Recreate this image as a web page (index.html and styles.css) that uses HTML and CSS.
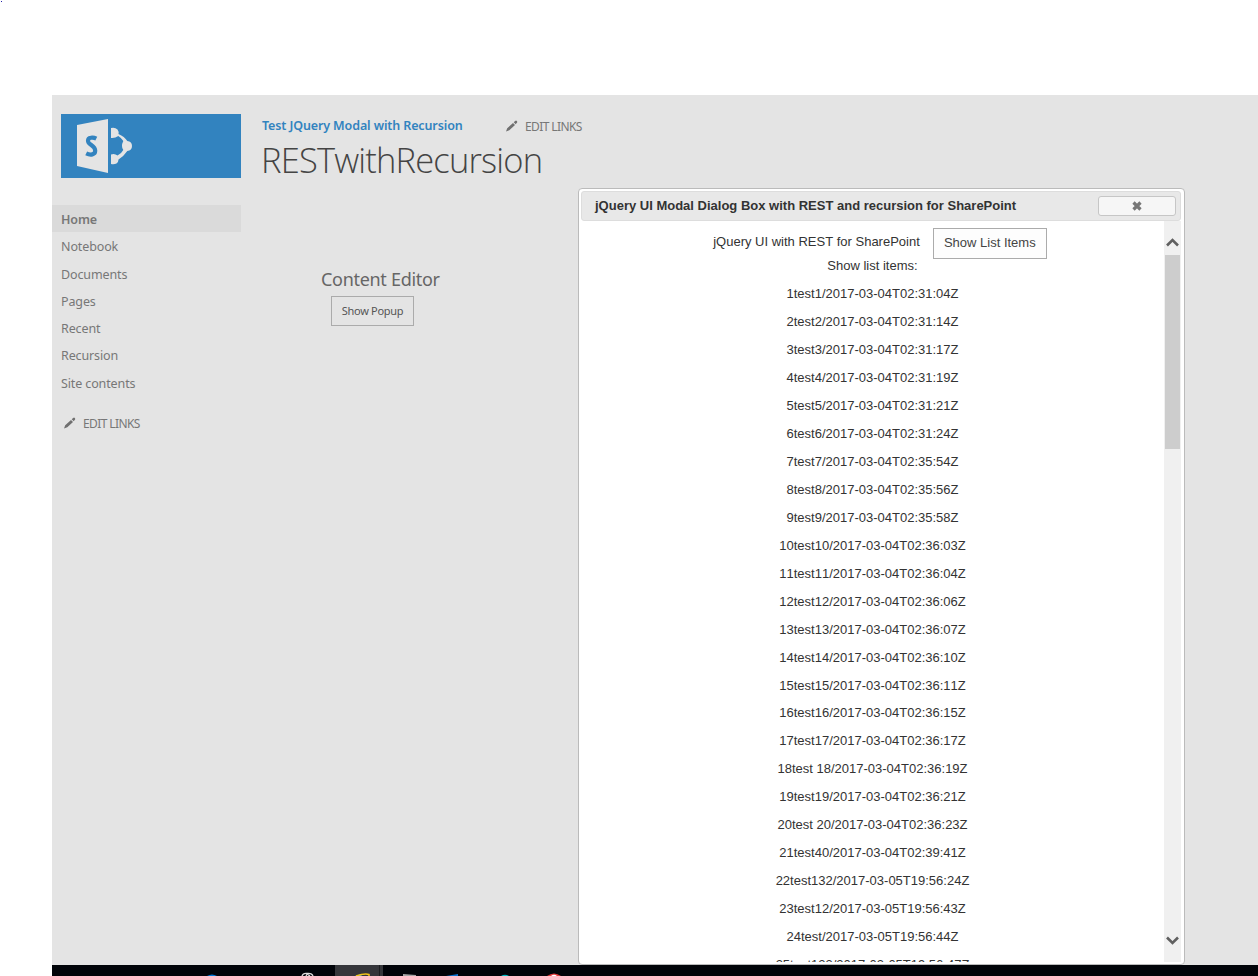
FILE: index.html
```
<!DOCTYPE html>
<html lang="en">
<head>
<meta charset="utf-8">
<title>RESTwithRecursion</title>
<link rel="stylesheet" href="styles.css">
</head>
<body>
<header class="blank"><span class="dot"></span></header>
<main class="workspace">
  <aside class="sidebar">
    <div class="logo">
      <svg width="180" height="64" viewBox="0 0 180 64">
        <path d="M16 11 47 5v54L16 52z" fill="#e4e4e4"/>
        <path d="M35.300 24.600C33.500 23.700 31.500 23.400 29.800 23.800 26 24.500 26.400 28.500 29.200 30.300 31.500 32 34.200 33.200 34.200 36.800 34.200 40.800 29.500 41.500 25.200 39.400" fill="none" stroke="#3283bf" stroke-width="4.200"/>
        <path d="M50 14Q54 13 56.500 15.500 58 17.500 57.500 20 63.500 22.500 66.300 27 71 27.500 71 32T66.300 37Q63 42 57.500 45.500 57.500 48 55.500 49.500 53 50.800 50 50V40.500Q53.500 39 56.500 41.500 60.500 39.500 62.300 36 61 34.500 61 32T62.300 27Q60.500 24 57.300 22 54 24.500 50 24z" fill="#e4e4e4"/>
      </svg>
    </div>
    <nav class="nav">
      <a class="nav-item current">Home</a>
      <a class="nav-item">Notebook</a>
      <a class="nav-item">Documents</a>
      <a class="nav-item">Pages</a>
      <a class="nav-item">Recent</a>
      <a class="nav-item">Recursion</a>
      <a class="nav-item">Site contents</a>
    </nav>
    <div class="edit side-edit">
      <svg class="pencil" width="12" height="12" viewBox="0 0 12 12"><path d="M0 11.500 1.200 8.300 7 3 9 5 3.300 10.300zM7.700 2.300 9.100.9q1-.7 1.700 0t.3 1.700L9.700 4.200z"/></svg>
      <span>EDIT LINKS</span>
    </div>
  </aside>
  <section class="content">
    <div class="topnav">
      <a class="crumb">Test JQuery Modal with Recursion</a>
      <div class="edit top-edit">
        <svg class="pencil" width="12" height="12" viewBox="0 0 12 12"><path d="M0 11.500 1.200 8.300 7 3 9 5 3.300 10.300zM7.700 2.300 9.100.9q1-.7 1.700 0t.3 1.700L9.700 4.200z"/></svg>
        <span>EDIT LINKS</span>
      </div>
    </div>
    <h1 class="title">RESTwithRecursion</h1>
    <div class="webpart">
      <h2 class="part-title">Content Editor</h2>
      <button class="popup-btn">Show Popup</button>
    </div>
  </section>
</main>

<div class="dialog">
  <div class="titlebar">
    <span class="dialog-title">jQuery UI Modal Dialog Box with REST and recursion for SharePoint</span>
    <button class="close"><svg width="10" height="10" viewBox="0 0 10 10"><path d="M1.500 1.500l7 7m0-7l-7 7" stroke="#777" stroke-width="3.200"/></svg></button>
  </div>
  <div class="dialog-body">
    <div class="scroll-area">
      <div class="intro"><span class="intro-text">jQuery UI with REST for SharePoint</span><button class="list-btn">Show List Items</button></div>
      <p class="label">Show list items:</p>
      <div class="rows">
        <p>1test1/2017-03-04T02:31:04Z</p>
        <p>2test2/2017-03-04T02:31:14Z</p>
        <p>3test3/2017-03-04T02:31:17Z</p>
        <p>4test4/2017-03-04T02:31:19Z</p>
        <p>5test5/2017-03-04T02:31:21Z</p>
        <p>6test6/2017-03-04T02:31:24Z</p>
        <p>7test7/2017-03-04T02:35:54Z</p>
        <p>8test8/2017-03-04T02:35:56Z</p>
        <p>9test9/2017-03-04T02:35:58Z</p>
        <p>10test10/2017-03-04T02:36:03Z</p>
        <p>11test11/2017-03-04T02:36:04Z</p>
        <p>12test12/2017-03-04T02:36:06Z</p>
        <p>13test13/2017-03-04T02:36:07Z</p>
        <p>14test14/2017-03-04T02:36:10Z</p>
        <p>15test15/2017-03-04T02:36:11Z</p>
        <p>16test16/2017-03-04T02:36:15Z</p>
        <p>17test17/2017-03-04T02:36:17Z</p>
        <p>18test 18/2017-03-04T02:36:19Z</p>
        <p>19test19/2017-03-04T02:36:21Z</p>
        <p>20test 20/2017-03-04T02:36:23Z</p>
        <p>21test40/2017-03-04T02:39:41Z</p>
        <p>22test132/2017-03-05T19:56:24Z</p>
        <p>23test12/2017-03-05T19:56:43Z</p>
        <p>24test/2017-03-05T19:56:44Z</p>
        <p>25test123/2017-03-05T19:56:47Z</p>
      </div>
    </div>
    <div class="scrollbar">
      <svg class="arrow" width="13" height="9" viewBox="0 0 13 9"><path d="M1 7.500 6.500 2 12 7.500" fill="none" stroke="#606060" stroke-width="2.600"/></svg>
      <div class="thumb"></div>
      <svg class="arrow down" width="13" height="9" viewBox="0 0 13 9"><path d="M1 1.500 6.500 7 12 1.500" fill="none" stroke="#606060" stroke-width="2.600"/></svg>
    </div>
  </div>
</div>

<footer class="taskbar">
  <svg width="1206" height="11" viewBox="0 0 1206 11">
    <path d="M283 0h48v11h-48z" fill="#35363a"/>
    <path d="M327 0h1v11h-1z" fill="#1d1e21"/>
    <path d="M155 11q5-3 10 0z" fill="#0078d7"/>
    <path d="M250 11q1-3 5-2.500 5-.5 6 2.500M254 11l1-2 3 2" fill="none" stroke="#ddd" stroke-width="1.300"/>
    <path d="M303 11q6-2.500 10-2l-5 2z" fill="#38bdf2"/>
    <path d="M304 11q9-3 13-1.500v1.500" fill="none" stroke="#f3c316" stroke-width="1.500"/>
    <path d="M351 9l13 1v1h-13z" fill="#a5a5a5"/>
    <path d="M394 11l12-2v2z" fill="#0b72ce"/>
    <path d="M449 11q4-2.500 8 0z" fill="#00b7c3"/>
    <path d="M495 11q7-5 14 0z" fill="#e03b3b"/><path d="M499 11q3-2.500 6 0z" fill="#fff"/>
  </svg>
</footer>
</body>
</html>
```

FILE: styles.css
```
* { box-sizing: border-box; }
body {
  margin: 0;
  width: 1258px;
  height: 976px;
  overflow: hidden;
  position: relative;
  display: flex;
  flex-direction: column;
  background: #fff;
  font-family: "Noto Sans", "Open Sans", sans-serif;
}
h1, h2, p { margin: 0; font-weight: normal; }
button { padding: 0; font: inherit; }
.blank { height: 95px; flex: none; padding-top: 1px; }
.dot { display: block; width: 1px; height: 1px; margin-left: 1px; background: #22a; }
.workspace {
  height: 870px;
  flex: none;
  margin-left: 52px;
  background: #e4e4e4;
  display: flex;
}
.sidebar { width: 189px; padding-top: 19px; }
.logo { margin-left: 9px; width: 180px; height: 64px; background: #3283bf; }
.logo svg { display: block; }
.nav { margin-top: 27px; }
.nav-item {
  display: block;
  height: 27.300px;
  padding-left: 9px;
  font-size: 12.500px;
  letter-spacing: -0.120px;
  line-height: 30px;
  color: #777;
}
.current { background: #dadada; font-weight: 600; height: 27.250px; }
.edit { display: flex; align-items: center; font-size: 12px; line-height: 18px; color: #777; letter-spacing: -0.600px; }
.pencil { display: block; fill: #707070; margin: 0 7px 1px 0; }
.side-edit { margin: 18px 0 0 12px; }
.edit span { padding-top: 1px; }
.content { padding: 20px 0 0 21px; }
.topnav { display: flex; height: 20px; align-items: center; }
.top-edit { padding-top: 2px; }
.crumb { width: 244px; font-size: 12.500px; font-weight: 600; letter-spacing: -0.120px; color: #3283bf; white-space: nowrap; }
.title { font-family: "Open Sans", "Noto Sans", sans-serif; font-weight: 300; font-size: 34.500px; letter-spacing: -0.820px; line-height: 48px; margin: 1px 0 0 -1px; color: #444; }
.webpart { margin: 83px 0 0 59px; width: 180px; }
.part-title { font-size: 18px; line-height: 24px; letter-spacing: -0.300px; color: #666; }
.popup-btn {
  display: block;
  margin: 5px 0 0 10px;
  width: 83px;
  height: 30px;
  border: 1px solid #ababab;
  background: transparent;
  color: #555;
  font-size: 11px;
  letter-spacing: -0.300px;
  padding-bottom: 2px;
}
.dialog {
  position: absolute;
  left: 578px;
  top: 188px;
  width: 607px;
  height: 777px;
  padding: 2px;
  border: 1px solid #bbb;
  border-radius: 4px;
  background: #fff;
  font-family: "Liberation Sans", Arial, sans-serif;
  font-size: 13px;
  font-kerning: none;
  color: #333;
}
.titlebar {
  height: 30px;
  width: 600px;
  padding: 0 4px 0 13px;
  display: flex;
  align-items: center;
  justify-content: space-between;
  background: #e8e8e8;
  border: 1px solid #ddd;
  border-radius: 3px;
}
.dialog-title { font-weight: bold; padding-bottom: 2px; }
.close {
  width: 78px;
  height: 20px;
  display: flex;
  align-items: center;
  justify-content: center;
  border: 1px solid #c6c6c6;
  border-radius: 3px;
  background: #f6f6f6;
}
.dialog-body { display: flex; height: 741px; width: 600px; }
.scroll-area { width: 583px; overflow: hidden; text-align: center; }
.intro { display: flex; justify-content: center; align-items: flex-start; height: 31px; padding-left: 15px; margin-top: 7px; }
.intro-text { margin-right: 13px; line-height: 27px; }
.list-btn { width: 114px; height: 31px; border: 1px solid #ababab; background: #fdfdfd; color: #444; line-height: 26px; padding-bottom: 2px; }
.label { line-height: 14px; }
.rows { margin-top: 7.180px; }
.rows p { height: 27.957px; line-height: 28px; }
.scrollbar { width: 17px; background: #f0f0f0; display: flex; flex-direction: column; padding: 17px 1px; }
.arrow { display: block; margin: 0 1px; flex: none; }
.thumb { margin-top: 8px; height: 194px; background: #cdcdcd; }
.down { margin-top: auto; }
.taskbar { margin-left: 52px; height: 11px; background: #010409; }
.taskbar svg { display: block; }
```
